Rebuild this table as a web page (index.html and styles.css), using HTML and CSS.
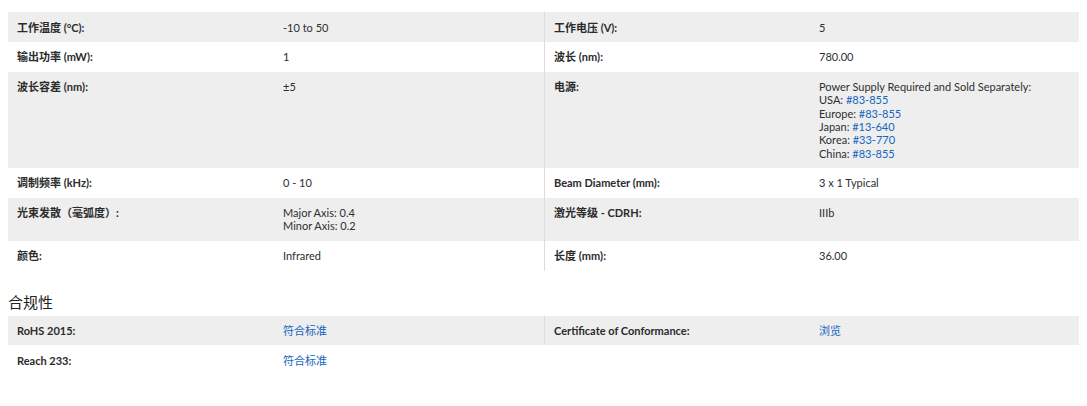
FILE: index.html
```html
<!DOCTYPE html>
<html lang="zh">
<head>
  <meta charset="utf-8">
  <title>规格</title>
  <link rel="stylesheet" href="styles.css">
</head>
<body>

<div class="specs">
  <div class="row shade">
    <div class="k">工作温度 (°C):</div><div class="v">-10 to 50</div>
    <div class="k split">工作电压 (V):</div><div class="v">5</div>
  </div>
  <div class="row">
    <div class="k">输出功率 (mW):</div><div class="v">1</div>
    <div class="k split">波长 (nm):</div><div class="v">780.00</div>
  </div>
  <div class="row shade">
    <div class="k">波长容差 (nm):</div><div class="v">±5</div>
    <div class="k split">电源:</div>
    <div class="v">Power Supply Required and Sold Separately:<br>
      USA: <a href="#">#83-855</a><br>
      Europe: <a href="#">#83-855</a><br>
      Japan: <a href="#">#13-640</a><br>
      Korea: <a href="#">#33-770</a><br>
      China: <a href="#">#83-855</a></div>
  </div>
  <div class="row">
    <div class="k">调制频率 (kHz):</div><div class="v">0 - 10</div>
    <div class="k split">Beam Diameter (mm):</div><div class="v">3 x 1 Typical</div>
  </div>
  <div class="row shade">
    <div class="k">光束发散（毫弧度）:</div><div class="v">Major Axis: 0.4<br>Minor Axis: 0.2</div>
    <div class="k split">激光等级 - CDRH:</div><div class="v">IIIb</div>
  </div>
  <div class="row">
    <div class="k">颜色:</div><div class="v">Infrared</div>
    <div class="k split">长度 (mm):</div><div class="v">36.00</div>
  </div>
</div>

<h3 class="section">合规性</h3>

<div class="specs">
  <div class="row shade">
    <div class="k">RoHS 2015:</div><div class="v"><a href="#">符合标准</a></div>
    <div class="k split">Certificate of Conformance:</div><div class="v"><a href="#">浏览</a></div>
  </div>
  <div class="row">
    <div class="k">Reach 233:</div><div class="v"><a href="#">符合标准</a></div>
    <div class="k"></div><div class="v"></div>
  </div>
</div>

</body>
</html>
```

FILE: styles.css
```css
body, html { background: white; color: #333; margin: 0; padding: 0; }
body {
  padding: 12px 8px 0 8px;
  font-family: Lato, "Noto Sans CJK SC", sans-serif;
  font-size: 11px;
  line-height: 13.3px;
}

.row {
  display: grid;
  grid-template-columns: 266px 270px 266px 1fr;
}
.row.shade { background: #eeeeee; }

.k, .v {
  padding: 8.5px 9px 8px 9px;
}
.k { font-weight: bold; color: #2b2b2b; }
.v { color: #2e2e2e; }
.split { border-left: 1px solid #dcdcdc; padding-left: 9px; }

a { color: #1565c0; text-decoration: none; }

.section {
  margin: 21px 0 4px 0;
  font-size: 15px;
  line-height: 20px;
  font-weight: normal;
  color: #222;
}
```
